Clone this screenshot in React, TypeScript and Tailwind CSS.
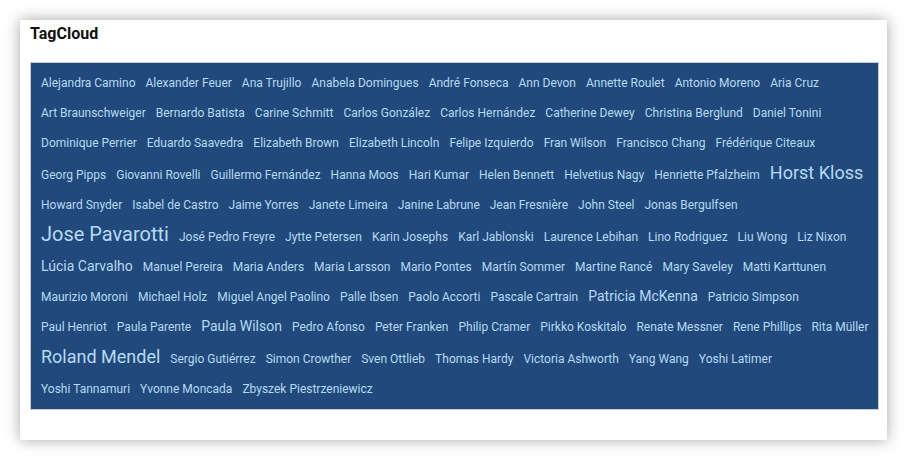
const tags: [string, number][] = [
  ["Alejandra Camino", 12],
  ["Alexander Feuer", 12],
  ["Ana Trujillo", 12],
  ["Anabela Domingues", 12],
  ["André Fonseca", 12],
  ["Ann Devon", 12],
  ["Annette Roulet", 12],
  ["Antonio Moreno", 12],
  ["Aria Cruz", 12],
  ["Art Braunschweiger", 12],
  ["Bernardo Batista", 12],
  ["Carine Schmitt", 12],
  ["Carlos González", 12],
  ["Carlos Hernández", 12],
  ["Catherine Dewey", 12],
  ["Christina Berglund", 12],
  ["Daniel Tonini", 12],
  ["Dominique Perrier", 12],
  ["Eduardo Saavedra", 12],
  ["Elizabeth Brown", 12],
  ["Elizabeth Lincoln", 12],
  ["Felipe Izquierdo", 12],
  ["Fran Wilson", 12],
  ["Francisco Chang", 12],
  ["Frédérique Citeaux", 12],
  ["Georg Pipps", 12],
  ["Giovanni Rovelli", 12],
  ["Guillermo Fernández", 12],
  ["Hanna Moos", 12],
  ["Hari Kumar", 12],
  ["Helen Bennett", 12],
  ["Helvetius Nagy", 12],
  ["Henriette Pfalzheim", 12],
  ["Horst Kloss", 18],
  ["Howard Snyder", 12],
  ["Isabel de Castro", 12],
  ["Jaime Yorres", 12],
  ["Janete Limeira", 12],
  ["Janine Labrune", 12],
  ["Jean Fresnière", 12],
  ["John Steel", 12],
  ["Jonas Bergulfsen", 12],
  ["Jose Pavarotti", 20],
  ["José Pedro Freyre", 12],
  ["Jytte Petersen", 12],
  ["Karin Josephs", 12],
  ["Karl Jablonski", 12],
  ["Laurence Lebihan", 12],
  ["Lino Rodriguez", 12],
  ["Liu Wong", 12],
  ["Liz Nixon", 12],
  ["Lúcia Carvalho", 14],
  ["Manuel Pereira", 12],
  ["Maria Anders", 12],
  ["Maria Larsson", 12],
  ["Mario Pontes", 12],
  ["Martín Sommer", 12],
  ["Martine Rancé", 12],
  ["Mary Saveley", 12],
  ["Matti Karttunen", 12],
  ["Maurizio Moroni", 12],
  ["Michael Holz", 12],
  ["Miguel Angel Paolino", 12],
  ["Palle Ibsen", 12],
  ["Paolo Accorti", 12],
  ["Pascale Cartrain", 12],
  ["Patricia McKenna", 14],
  ["Patricio Simpson", 12],
  ["Paul Henriot", 12],
  ["Paula Parente", 12],
  ["Paula Wilson", 14],
  ["Pedro Afonso", 12],
  ["Peter Franken", 12],
  ["Philip Cramer", 12],
  ["Pirkko Koskitalo", 12],
  ["Renate Messner", 12],
  ["Rene Phillips", 12],
  ["Rita Müller", 12],
  ["Roland Mendel", 18],
  ["Sergio Gutiérrez", 12],
  ["Simon Crowther", 12],
  ["Sven Ottlieb", 12],
  ["Thomas Hardy", 12],
  ["Victoria Ashworth", 12],
  ["Yang Wang", 12],
  ["Yoshi Latimer", 12],
  ["Yoshi Tannamuri", 12],
  ["Yvonne Moncada", 12],
  ["Zbyszek Piestrzeniewicz", 12],
];

// font size + line height per tag weight
const sizeClass: Record<number, string> = {
  12: "text-[12px] leading-[30px]",
  14: "text-[14px] leading-[28px]",
  18: "text-[18px] leading-[30px]",
  20: "text-[20px] leading-[29px]",
};

export default function App() {
  return (
    <div className="min-h-[460px] w-[907px] bg-white pt-5 pl-5 font-['Roboto',sans-serif]">
      <div className="w-[867px] h-[420px] bg-white shadow-[0_0_14px_rgba(0,0,0,0.35)] pt-[4px] pl-[10px]">
        <div className="h-5 leading-5 text-[16px] font-bold text-[#111]">TagCloud</div>
        <div className="mt-[18px] w-[849px] h-[348px] border border-[#c5ccd6] bg-[#21497b] pt-[5px] pb-[5px] pl-[5px] pr-[2px] text-[12px] leading-[30px]">
          {tags.map(([name, size]) => (
            <span
              key={name}
              className={`inline-block px-[5px] text-[#b7daf3] cursor-pointer ${sizeClass[size]}`}
            >
              {name}
            </span>
          ))}
        </div>
      </div>
    </div>
  );
}
